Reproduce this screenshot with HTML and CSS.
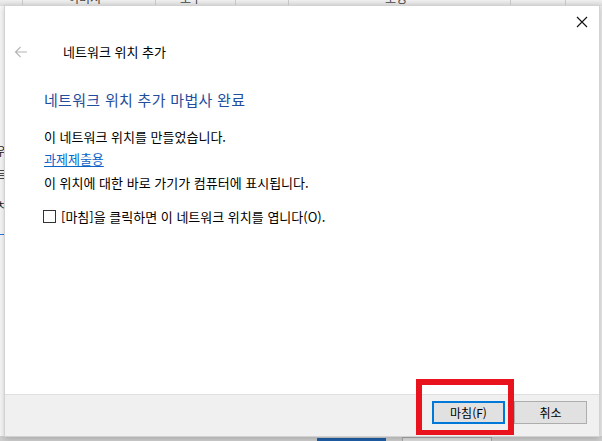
FILE: index.html
```html
<!DOCTYPE html>
<html lang="ko">
<head>
<meta charset="utf-8">
<link rel="stylesheet" href="styles.css">
</head>
<body>
<div class="desktop">
  <div class="ribbon">
    <span class="rib-sep s1"></span>
    <span class="rib-label l1">이미지</span>
    <span class="rib-sep s2"></span>
    <span class="rib-label l2">도구</span>
    <span class="rib-sep s3"></span>
    <span class="rib-sep s4"></span>
    <span class="rib-label l3">보정</span>
    <span class="rib-sep s5"></span>
    <span class="rib-sep s6"></span>
  </div>
  <div class="side">
    <span class="side-t t1">우</span>
    <span class="side-t t2">트</span>
    <span class="side-t t3">ㅊ</span>
    <span class="side-line"></span>
  </div>
  <div class="under">
    <span class="under-blue"></span>
    <span class="under-btn"></span>
  </div>

  <div class="dialog">
    <button class="close" aria-label="닫기">
      <svg width="12" height="12" viewBox="0 0 12 12"><path d="M1 1L11 11M11 1L1 11" stroke="#111" stroke-width="1.1" fill="none"/></svg>
    </button>
    <div class="body">
      <div class="header">
        <svg class="back" width="14" height="12" viewBox="0 0 14 12"><path d="M13 6H1.5M6.5 1L1.5 6L6.5 11" stroke="#b4b4b4" stroke-width="1.1" fill="none"/></svg>
        <span class="title">네트워크 위치 추가</span>
      </div>
      <h1 class="heading">네트워크 위치 추가 마법사 완료</h1>
      <p class="line l-first">이 네트워크 위치를 만들었습니다.</p>
      <p class="line l-link"><a class="link" href="#">과제제출용</a></p>
      <p class="line l-third">이 위치에 대한 바로 가기가 컴퓨터에 표시됩니다.</p>
      <label class="check-row"><span class="box"></span><span>[마침]을 클릭하면 이 네트워크 위치를 엽니다(O).</span></label>
    </div>
    <div class="footer">
      <button class="btn primary">마침(F)</button>
      <button class="btn">취소</button>
    </div>
  </div>

  <div class="highlight"></div>
</div>
</body>
</html>
```
FILE: styles.css
```css
* { box-sizing: border-box; }
html, body { margin: 0; padding: 0; }
body {
  width: 602px;
  height: 441px;
  overflow: hidden;
  font-family: "Noto Sans CJK KR", "Noto Sans", sans-serif;
  background: #e9e9e9;
}
.desktop { position: relative; width: 602px; height: 441px; overflow: hidden; }

.ribbon {
  position: absolute; left: 0; top: 0; width: 602px; height: 6px;
  background: linear-gradient(#efefef, #dcdcdc);
  overflow: hidden;
}
.rib-sep { position: absolute; top: 0; width: 1px; height: 6px; background: #c9c9c9; }
.s1 { left: 22px; } .s2 { left: 155px; } .s3 { left: 235px; } .s4 { left: 288px; }
.s5 { left: 510px; } .s6 { left: 565px; }
.rib-label {
  position: absolute; top: -9px; font-size: 12px; line-height: 14px; color: #444;
}
.l1 { left: 68px; } .l2 { left: 180px; } .l3 { left: 385px; }

.side {
  position: absolute; left: 0; top: 6px; width: 6px; height: 435px; background: #f6f6f6;
}
.side-t { position: absolute; left: -5px; font-size: 12px; line-height: 14px; color: #222; }
.t1 { top: 138px; } .t2 { top: 162px; } .t3 { top: 192px; }
.side-line { position: absolute; left: 0; top: 228px; width: 6px; height: 1px; background: #2a7ad6; }

.under { position: absolute; left: 0; top: 436px; width: 602px; height: 5px; background: #cfcfcf; }
.under-blue { position: absolute; left: 317px; top: 2px; width: 69px; height: 3px; background: #1f5fa8; }
.under-btn { position: absolute; left: 402px; top: 1px; width: 90px; height: 4px; background: #dedede; border: 1px solid #a9a9a9; border-bottom: 0; }

.dialog {
  position: absolute; left: 4px; top: 5px; width: 596px; height: 432px;
  background: #fff;
  border: 1px solid #d2d2d2;
  box-shadow: 0 2px 6px rgba(0,0,0,0.18);
  display: flex; flex-direction: column;
}
.close {
  position: absolute; right: 11px; top: 10px;
  width: 12px; height: 12px; padding: 0; border: 0; background: transparent;
  display: flex;
}
.body { flex: 1; padding: 36px 0 0 8px; }
.header { display: flex; align-items: center; height: 20px; }
.back { margin-left: 1px; }
.title { margin-left: 35px; font-size: 13px; color: #000; line-height: 20px; }

.heading {
  margin: 27px 0 0 31px;
  font-size: 15px; font-weight: normal; line-height: 22px;
  letter-spacing: 0.3px;
  color: #1f4e9c;
}
.line { margin: 0 0 0 31px; font-size: 13px; line-height: 20px; color: #000; }
.l-first { margin-top: 16px; }
.l-link { margin-top: 2px; }
.l-third { margin-top: 4px; }
.link { color: #0a64c8; text-decoration: underline; text-underline-offset: 2px; }

.check-row {
  display: flex; align-items: center; gap: 5px;
  margin: 13px 0 0 30px; height: 20px;
  font-size: 13px; color: #000;
}
.box { width: 13px; height: 13px; border: 1px solid #333; background: #fff; flex: none; }

.footer {
  height: 42px; flex: none;
  background: #f0f0f0; border-top: 1px solid #dfdfdf;
  display: flex; justify-content: flex-end; align-items: flex-start;
  gap: 9px; padding: 6px 12px 0 0;
}
.btn {
  width: 73px; height: 23px; padding: 0;
  font-family: inherit; font-size: 12px; color: #000;
  background: #e1e1e1; border: 1px solid #adadad;
}
.btn.primary { border: 2px solid #0078d7; }

.highlight {
  position: absolute; left: 416px; top: 379px; width: 98px; height: 56px;
  border: 6px solid #e8131d; border-bottom-width: 5px;
}
```
